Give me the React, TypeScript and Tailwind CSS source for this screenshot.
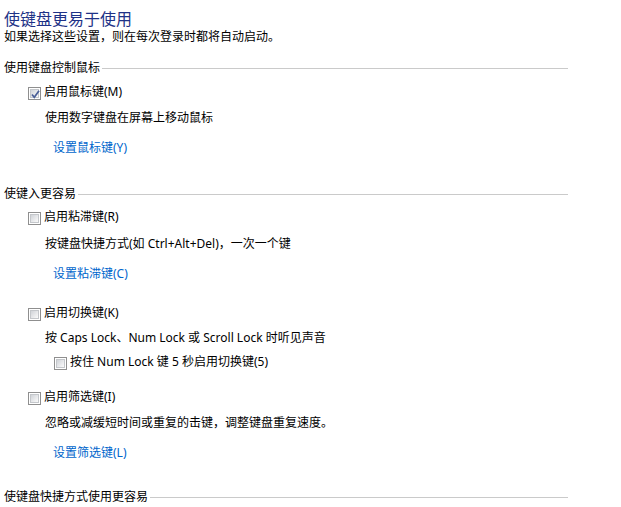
import type { ReactNode } from 'react';

const font = 'font-["Noto_Sans","Noto_Sans_CJK_SC",sans-serif]';

const CheckBox = ({ checked = false }: { checked?: boolean }) => (
  <span className="relative mt-[3px] inline-flex h-[13px] w-[13px] shrink-0 border border-[#8f8f8f] bg-white p-[1px]">
    <span className="block h-full w-full border border-[#c4c7cb] bg-gradient-to-br from-[#d0d3d8] to-[#fbfbfb]" />
    {checked && (
      <svg className="absolute left-[1px] top-[1px]" width="11" height="11" viewBox="0 0 11 11">
        <path d="M2 5.5 L4.3 8.3 L9 1.8" fill="none" stroke="#4a5f97" strokeWidth="1.7" />
      </svg>
    )}
  </span>
);

const SectionHeader = ({ title, className = '' }: { title: string; className?: string }) => (
  <div className={`flex h-4 w-[564px] items-center ${className}`}>
    <span className="text-[12px] leading-4 text-black">{title}</span>
    <span className="ml-[2px] h-px flex-1 bg-[#cacaca]" />
  </div>
);

const CheckRow = ({
  label,
  checked,
  className = '',
}: {
  label: string;
  checked?: boolean;
  className?: string;
}) => (
  <div className={`flex h-4 items-start gap-[3px] ${className}`}>
    <CheckBox checked={checked} />
    <span className="text-[12px] leading-4 text-black">{label}</span>
  </div>
);

const Line = ({ children, className = '' }: { children: ReactNode; className?: string }) => (
  <div className={`h-4 text-[12px] leading-4 ${className}`}>{children}</div>
);

export default function App() {
  return (
    <div className={`h-[507px] w-[621px] overflow-hidden bg-white pl-1 pt-[9px] ${font}`}>
      {/* Header */}
      <h1 className="h-5 text-[16px] leading-5 text-[#1e3287]">使键盘更易于使用</h1>
      <Line className="text-black">如果选择这些设置，则在每次登录时都将自动启动。</Line>

      {/* Mouse keys */}
      <SectionHeader title="使用键盘控制鼠标" className="mt-[15px]" />
      <CheckRow label="启用鼠标键(M)" checked className="mt-2 pl-6" />
      <Line className="mt-[10px] pl-[41px] text-black">使用数字键盘在屏幕上移动鼠标</Line>
      <Line className="mt-[14px] pl-[49px] text-[#0066cc]">设置鼠标键(Y)</Line>

      {/* Typing */}
      <SectionHeader title="使键入更容易" className="mt-[30px]" />
      <CheckRow label="启用粘滞键(R)" className="mt-[7px] pl-6" />
      <Line className="mt-[11px] pl-[41px] text-black">按键盘快捷方式(如 Ctrl+Alt+Del)，一次一个键</Line>
      <Line className="mt-[14px] pl-[49px] text-[#0066cc]">设置粘滞键(C)</Line>

      <CheckRow label="启用切换键(K)" className="mt-[23px] pl-6" />
      <Line className="mt-[9px] pl-[41px] text-black">按 Caps Lock、Num Lock 或 Scroll Lock 时听见声音</Line>
      <CheckRow label="按住 Num Lock 键 5 秒启用切换键(5)" className="mt-2 pl-[50px]" />

      <CheckRow label="启用筛选键(I)" className="mt-[19px] pl-6" />
      <Line className="mt-[10px] pl-[41px] text-black">忽略或减缓短时间或重复的击键，调整键盘重复速度。</Line>
      <Line className="mt-[14px] pl-[49px] text-[#0066cc]">设置筛选键(L)</Line>

      {/* Shortcuts */}
      <SectionHeader title="使键盘快捷方式使用更容易" className="mt-[28px]" />
    </div>
  );
}
